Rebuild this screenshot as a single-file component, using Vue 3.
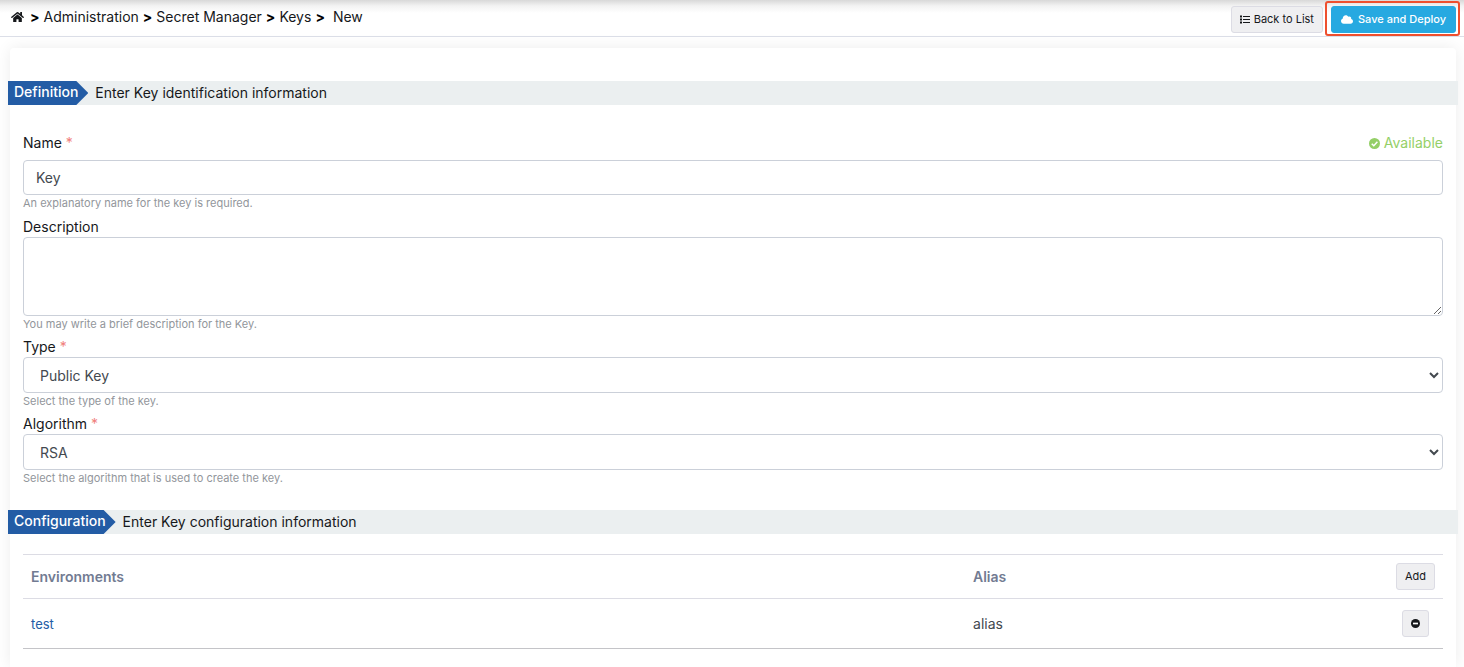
<script setup>
import { ref } from 'vue'

const crumbs = ['Administration', 'Secret Manager', 'Keys']
const name = ref('Key')
const description = ref('')
const type = ref('Public Key')
const algorithm = ref('RSA')
const environments = ref([{ name: 'test', alias: 'alias' }])
</script>

<template>
  <div class="page">
    <header class="topbar">
      <nav class="crumbs" aria-label="Breadcrumb">
        <a href="#" class="home" aria-label="Home">
          <svg viewBox="0 0 576 512" width="13" height="12" fill="currentColor">
            <path d="M280.4 148.3 96 300.100V464a16 16 0 0 0 16 16l112.100-.3a16 16 0 0 0 15.900-16V368a16 16 0 0 1 16-16h64a16 16 0 0 1 16 16v95.600a16 16 0 0 0 16 16.100L464 480a16 16 0 0 0 16-16V300L295.700 148.300a12.200 12.200 0 0 0-15.300 0zM571.600 251.500 488 182.600V44a12 12 0 0 0-12-12h-56a12 12 0 0 0-12 12v72.600L318.500 43a48 48 0 0 0-61 0L4.300 251.500a12 12 0 0 0-1.600 16.900l25.500 31a12 12 0 0 0 16.900 1.600l235.200-193.700a12.200 12.200 0 0 1 15.300 0L530.900 301a12 12 0 0 0 16.900-1.600l25.500-31a12 12 0 0 0-1.700-16.900z" />
          </svg>
        </a>
        <template v-for="crumb in crumbs" :key="crumb">
          <span class="sep">&gt;</span>
          <a href="#">{{ crumb }}</a>
        </template>
        <span class="sep">&gt;</span>
        <span class="current">New</span>
      </nav>
      <div class="actions">
        <button type="button" class="btn">
          <svg viewBox="0 0 20 16" width="10" height="9" fill="currentColor">
            <path d="M0 0h4v4H0zM0 6h4v4H0zM0 12h4v4H0zM6 1h14v2H6zM6 7h14v2H6zM6 13h14v2H6z" />
          </svg>
          Back to List
        </button>
        <div class="highlight">
          <button type="button" class="btn primary">
            <svg viewBox="0 0 640 448" width="12" height="9" fill="currentColor">
              <path d="M537.600 194.600c4.100-10.700 6.400-22.400 6.400-34.600 0-53-43-96-96-96-19.700 0-38.100 6-53.300 16.200C367 32.200 315.300 0 256 0 167.600 0 96 71.600 96 160c0 2.700.1 5.400.2 8.100C40.200 187.800 0 241.200 0 304c0 79.500 64.500 144 144 144h368c70.700 0 128-57.300 128-128 0-61.900-44-113.600-102.400-125.400z" />
            </svg>
            Save and Deploy
          </button>
        </div>
      </div>
    </header>

    <main class="card">
      <h2 class="section">
        <span class="tag">Definition</span>
        <span class="hint">Enter Key identification information</span>
      </h2>
      <form class="form" @submit.prevent>
        <div class="field name-field">
          <div class="label-row">
            <label for="name">Name <span class="req">*</span></label>
            <span class="available">
              <svg viewBox="0 0 16 16" width="11" height="11">
                <circle cx="8" cy="8" r="8" fill="currentColor" />
                <path d="M4 8.300 7 11.200 12.200 5.600" fill="none" stroke="#fff" stroke-width="2.200" />
              </svg>
              Available
            </span>
          </div>
          <input id="name" v-model="name" type="text" class="control" />
          <small>An explanatory name for the key is required.</small>
        </div>
        <div class="field">
          <label for="description">Description</label>
          <textarea id="description" v-model="description" class="control"></textarea>
          <small>You may write a brief description for the Key.</small>
        </div>
        <div class="field">
          <label for="type">Type <span class="req">*</span></label>
          <select id="type" v-model="type" class="control">
            <option>Public Key</option>
            <option>Private Key</option>
          </select>
          <small>Select the type of the key.</small>
        </div>
        <div class="field">
          <label for="algorithm">Algorithm <span class="req">*</span></label>
          <select id="algorithm" v-model="algorithm" class="control">
            <option>RSA</option>
            <option>EC</option>
          </select>
          <small>Select the algorithm that is used to create the key.</small>
        </div>
      </form>

      <h2 class="section">
        <span class="tag">Configuration</span>
        <span class="hint">Enter Key configuration information</span>
      </h2>
      <div class="table-wrap">
        <table>
          <thead>
            <tr>
              <th class="env">Environments</th>
              <th>Alias</th>
              <th class="action"><button type="button" class="btn">Add</button></th>
            </tr>
          </thead>
          <tbody>
            <tr v-for="env in environments" :key="env.name">
              <td class="env"><a href="#">{{ env.name }}</a></td>
              <td>{{ env.alias }}</td>
              <td class="action">
                <button type="button" class="btn remove" aria-label="Remove">
                  <svg viewBox="0 0 16 16" width="9" height="9">
                    <circle cx="8" cy="8" r="8" fill="currentColor" />
                    <path d="M3.500 8h9" stroke="#fff" stroke-width="3" />
                  </svg>
                </button>
              </td>
            </tr>
          </tbody>
        </table>
      </div>
    </main>
  </div>
</template>

<style>
body {
  margin: 0;
  background: #fff;
}
</style>

<style scoped>
.page {
  min-height: 100vh;
  display: flex;
  flex-direction: column;
  overflow: hidden;
  font: 14px/20px Inter, "Liberation Sans", sans-serif;
  color: #16181b;
}
.page *,
.page *::after {
  box-sizing: border-box;
}
a {
  color: inherit;
  text-decoration: none;
}
.topbar {
  display: flex;
  justify-content: space-between;
  align-items: flex-start;
  padding: 6px 8px 3px 11px;
  border-bottom: 1px solid #dcdfe8;
  background: linear-gradient(#d8d8d8, #f3f3f3 6px, #fff 13px);
}
.crumbs {
  display: flex;
  align-items: center;
  gap: 4px;
  padding-top: 1px;
}
.home {
  display: flex;
  margin-right: 2px;
}
.sep {
  font-weight: 700;
  color: #000;
}
.current {
  margin-left: 4px;
}
.actions {
  display: flex;
  gap: 8px;
}
.btn {
  display: flex;
  align-items: center;
  justify-content: center;
  gap: 4px;
  height: 27px;
  padding: 0 8px 1px;
  border: 1px solid #dcdce4;
  border-radius: 3px;
  background: #efeff1;
  color: #16181b;
  font: 400 11px/16px Inter, "Liberation Sans", sans-serif;
}
.btn.primary {
  gap: 5px;
  padding: 0 9px 1px;
  border-color: #27a9e1;
  background: #27a9e1;
  color: #fff;
  font-weight: 500;
}
.highlight {
  position: relative;
}
.highlight::after {
  content: "";
  position: absolute;
  inset: -5px -4px -3px -6px;
  border: 2px solid #ee4f2e;
  border-radius: 3px;
  pointer-events: none;
}
.card {
  flex: 1;
  margin: 11px 8px 0 10px;
  padding-top: 33px;
  border-radius: 4px 4px 0 0;
  background: #fff;
  box-shadow: 0 0 16px rgba(0, 0, 0, 0.08);
}
.section {
  display: flex;
  height: 24px;
  margin: 0 -2px;
  background: #ebeff0;
  font-size: 14px;
  font-weight: 400;
  line-height: 24px;
}
.tag {
  padding: 0 10px 0 6px;
  background: #235ca5;
  clip-path: polygon(0 0, calc(100% - 12px) 0, 100% 50%, calc(100% - 12px) 100%, 0 100%);
  color: #fff;
  font-weight: 500;
  line-height: 22px;
}
.hint {
  margin-left: 7px;
}
.form {
  display: flex;
  flex-direction: column;
  gap: 5px;
  padding: 28px 13px 24px;
}
.field {
  display: flex;
  flex-direction: column;
}
.name-field {
  padding-bottom: 1px;
}
.label-row {
  display: flex;
  justify-content: space-between;
  margin-bottom: 7px;
}
.req {
  color: #f0807c;
}
.available {
  display: flex;
  align-items: center;
  gap: 4px;
  color: #94cf67;
}
.control {
  width: 100%;
  height: 36px;
  margin: 0;
  padding: 0 12px;
  border: 1px solid #cbd0d9;
  border-radius: 4px;
  background: #fff;
  color: #43494f;
  font: 14px/20px Inter, "Liberation Sans", sans-serif;
}
input.control {
  height: 35px;
}
select.control {
  padding: 0 0 0 12px;
}
textarea.control {
  display: block;
  height: 79px;
  padding: 8px 12px;
  resize: vertical;
}
small {
  color: #92969b;
  font-size: 11px;
  line-height: 16px;
}
.table-wrap {
  padding: 20px 13px 18px;
}
table {
  width: 100%;
  border-collapse: collapse;
  table-layout: fixed;
}
th,
td {
  padding: 8px;
  border-top: 1px solid #dcdce4;
  text-align: left;
  vertical-align: middle;
}
th {
  color: #727b92;
  font-weight: 600;
}
td {
  padding: 11px 8px;
  border-bottom: 1px solid #c4c4c8;
  color: #43494f;
}
.env {
  width: 66.340%;
}
td a {
  color: #235ca5;
  font-size: 13px;
}
.action .btn {
  margin-left: auto;
}
.btn.remove {
  width: 27px;
  margin-right: 6px;
  padding: 0;
}
</style>
